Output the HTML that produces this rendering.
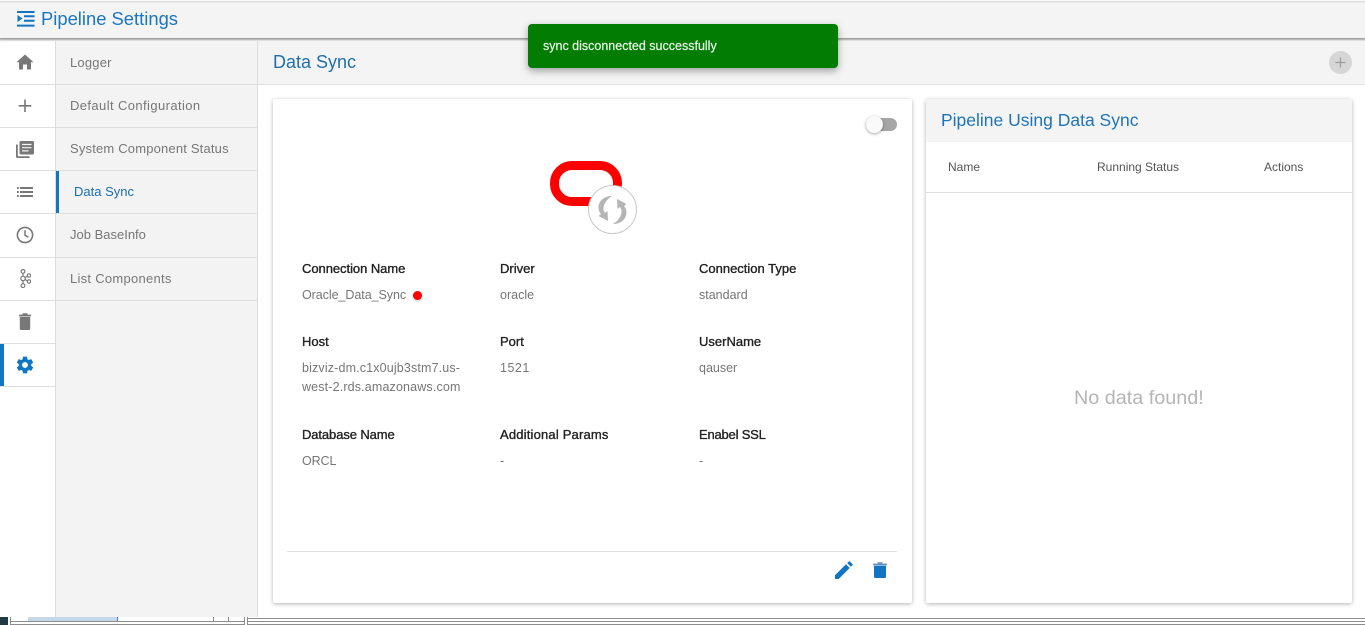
<!DOCTYPE html>
<html><head><meta charset="utf-8"><title>Pipeline Settings</title>
<style>
*{box-sizing:border-box}
html,body{margin:0;padding:0;width:1365px;height:625px;overflow:hidden;background:#fff;font-family:"Liberation Sans",sans-serif}
.a{position:absolute}
.t{position:absolute;white-space:nowrap;line-height:16px}
.lab{font-size:13px;color:#222;font-weight:400;-webkit-text-stroke:.35px #222}
.val{font-size:12.5px;color:#767676;line-height:18.5px}
.menu{font-size:13px;color:#777;left:70px}
.hl{position:absolute;height:1px;background:#dedede}
</style></head><body>
<div class="a" style="left:0;top:0;width:1365px;height:2px;background:#fff"></div>
<div class="a" style="left:0;top:2px;width:1365px;height:36px;background:#f4f4f4;border-top:1px solid #e8e8e8;box-shadow:0 1px 2px 1px #9a9a9a"></div>
<svg class="a" style="left:17px;top:11px" width="18" height="16" viewBox="0 0 18 16"><path d="M0 1H17.500M7 5.300H17.500M7 9.700H17.500M0 14.600H17.500" stroke="#1175c2" stroke-width="2" fill="none"/><path d="M0.500 4l5 3.500-5 3.500z" fill="#1175c2"/></svg>
<div class="t" style="left:41px;top:9px;font-size:18.400px;line-height:20px;color:#1a76c0">Pipeline Settings</div>

<!-- icon rail -->
<div class="a" style="left:55px;top:41px;width:203px;height:576px;background:#f3f3f3;border-left:1px solid #dcdcdc;border-right:1px solid #dcdcdc"></div>
<div class="hl" style="left:0;top:84px;width:258px"></div>
<div class="hl" style="left:0;top:127px;width:258px"></div>
<div class="hl" style="left:0;top:170px;width:258px"></div>
<div class="hl" style="left:0;top:213px;width:258px"></div>
<div class="hl" style="left:0;top:257px;width:258px"></div>
<div class="hl" style="left:0;top:300px;width:258px"></div>
<div class="hl" style="left:0;top:343px;width:55px"></div>
<div class="hl" style="left:0;top:386px;width:55px"></div>
<div class="a" style="left:56px;top:171px;width:3px;height:42px;background:#0f76c1"></div>
<div class="a" style="left:0;top:344px;width:4px;height:42px;background:#0f76c1"></div>

<svg class="a" style="left:16px;top:54px" width="18" height="16" viewBox="0 0 18 16"><path d="M9 .5L.5 8.200H3V15.500H7V10.500H11V15.500H15V8.200H17.500z" fill="#787878"/></svg>
<svg class="a" style="left:18px;top:99px" width="14" height="14" viewBox="0 0 14 14"><path d="M7 .5V13M.7 6.800H13.300" stroke="#787878" stroke-width="1.600" fill="none"/></svg>
<svg class="a" style="left:16px;top:141px" width="18" height="17" viewBox="0 0 18 17"><path d="M0 3.500H1.800V15.200H13.500V17H1.500Q0 17 0 15.500z" fill="#787878"/><path d="M3.500 1.500Q3.500 0 5 0H16.500Q18 0 18 1.500V12Q18 13.500 16.500 13.500H5Q3.500 13.500 3.500 12z" fill="#787878"/><path d="M6 3.500H15.500M6 6.700H15.500M6 9.900H12.500" stroke="#f3f3f3" stroke-width="1.200"/></svg>
<svg class="a" style="left:17px;top:187px" width="16" height="10" viewBox="0 0 16 10"><path d="M0 1H1.800M3 1H16M0 5H1.800M3 5H16M0 9H1.800M3 9H16" stroke="#787878" stroke-width="2"/></svg>
<svg class="a" style="left:16px;top:226px" width="18" height="18" viewBox="0 0 18 18"><circle cx="9" cy="9" r="7.600" fill="none" stroke="#787878" stroke-width="1.600"/><path d="M9 4.300V9.300L12.500 11.200" fill="none" stroke="#787878" stroke-width="1.500"/></svg>
<svg class="a" style="left:20px;top:269px" width="11" height="19" viewBox="0 0 11 19" fill="none" stroke="#787878" stroke-width="1.200"><circle cx="3" cy="2.400" r="1.900"/><circle cx="3" cy="9.500" r="2.200"/><circle cx="3" cy="16.600" r="1.900"/><circle cx="9" cy="6.500" r="1.700"/><circle cx="9" cy="12.500" r="1.700"/><path d="M3 4.300V7.300M3 11.700V14.700M5 8.500L7.500 7.200M5 10.500L7.500 11.800"/></svg>
<svg class="a" style="left:19px;top:313px" width="12" height="17" viewBox="0 0 12 17"><path d="M0 1.600H12V3.200H0zM3.500 .2H8.500V2H3.500z" fill="#787878"/><path d="M.8 3.800H11.200V15.500Q11.200 17 9.700 17H2.300Q.8 17 .8 15.500z" fill="#787878"/></svg>
<svg class="a" style="left:15px;top:355px" width="20" height="20" viewBox="0 0 24 24"><path fill="#0f76c1" d="M19.430 12.980c.04-.32.07-.64.07-.98s-.03-.66-.07-.98l2.110-1.650c.19-.15.24-.42.12-.64l-2-3.460c-.12-.22-.39-.3-.61-.22l-2.490 1c-.52-.4-1.080-.73-1.690-.98l-.38-2.650C14.460 2.180 14.250 2 14 2h-4c-.25 0-.46.18-.49.42l-.38 2.650c-.61.25-1.170.59-1.690.98l-2.490-1c-.23-.09-.49 0-.61.22l-2 3.460c-.13.22-.07.49.12.64l2.110 1.650c-.04.32-.07.65-.07.98s.03.66.07.98l-2.110 1.650c-.19.15-.24.42-.12.64l2 3.460c.12.22.39.3.61.22l2.490-1c.52.4 1.080.73 1.690.98l.38 2.650c.03.24.24.42.49.42h4c.25 0 .46-.18.49-.42l.38-2.650c.61-.25 1.170-.59 1.690-.98l2.490 1c.23.09.49 0 .61-.22l2-3.460c.12-.22.07-.49-.12-.64l-2.110-1.650zM12 15.500c-1.930 0-3.500-1.570-3.500-3.500s1.570-3.500 3.500-3.500 3.500 1.570 3.500 3.500-1.570 3.500-3.500 3.500z"/></svg>

<div class="t menu" style="top:55px;letter-spacing:.2px">Logger</div>
<div class="t menu" style="top:98px;letter-spacing:.4px">Default Configuration</div>
<div class="t menu" style="top:141px;letter-spacing:.18px">System Component Status</div>
<div class="t" style="left:74px;top:184px;font-size:13px;color:#1a6db0">Data Sync</div>
<div class="t menu" style="top:227px">Job BaseInfo</div>
<div class="t menu" style="top:271px;letter-spacing:.27px">List Components</div>

<!-- main header -->
<div class="a" style="left:258px;top:41px;width:1107px;height:44px;background:#f4f4f4;border-bottom:1px solid #e2e2e2"></div>
<div class="t" style="left:273px;top:52px;font-size:18px;line-height:21px;color:#1f6fae">Data Sync</div>
<div class="a" style="left:1329px;top:51px;width:23px;height:23px;border-radius:50%;background:#d6d6d6"></div>
<svg class="a" style="left:1335px;top:57px" width="11" height="11" viewBox="0 0 11 11"><path d="M5.500 .5V10.500M.5 5.500H10.500" stroke="#9c9c9c" stroke-width="1.300"/></svg>

<!-- left card -->
<div class="a" style="left:273px;top:99px;width:639px;height:504px;background:#fff;border-radius:2px;box-shadow:0 1px 4px rgba(0,0,0,.3)"></div>
<div class="a" style="left:866px;top:118px;width:31px;height:13px;border-radius:7px;background:#a6a6a6"></div>
<div class="a" style="left:866px;top:116px;width:17px;height:17px;border-radius:50%;background:#fafafa;box-shadow:0 1px 3px rgba(0,0,0,.35)"></div>

<div class="a" style="left:550px;top:161px;width:72px;height:45px;border:9px solid #f00;border-radius:22px"></div>
<div class="a" style="left:588px;top:185px;width:49px;height:49px;border-radius:50%;background:#fff;border:1px solid #c8c8c8"></div>
<svg class="a" style="left:597px;top:195px" width="31" height="30" viewBox="0 0 31 30" fill="#b5b5b5"><path d="M15 1C7 1 1.500 6 1.500 12.500c0 2.500 1 5 2.500 6.500L1.500 21l9.500 5-.5-10-2.500 2C6.500 16 6 13.500 7 10.500 8.500 6.500 11 3.500 15 1z"/><path d="M16 29c8 0 13.500-5 13.500-11.500 0-2.500-1-5-2.500-6.500l2.500-2-9.500-5 .5 10 2.500-2c1.500 2 2 4.500 1 7.500C22.500 23.500 20 26.500 16 29z"/></svg>

<div class="t lab" style="left:302px;top:261px;letter-spacing:-.05px">Connection Name</div>
<div class="t lab" style="left:500px;top:261px">Driver</div>
<div class="t lab" style="left:699px;top:261px">Connection Type</div>
<div class="t val" style="left:302px;top:286px;letter-spacing:-.05px">Oracle_Data_Sync</div>
<div class="a" style="left:413px;top:291px;width:9px;height:9px;border-radius:50%;background:#f00;box-shadow:0 1px 2px rgba(0,0,0,.25)"></div>
<div class="t val" style="left:500px;top:286px">oracle</div>
<div class="t val" style="left:699px;top:286px">standard</div>

<div class="t lab" style="left:302px;top:334px">Host</div>
<div class="t lab" style="left:500px;top:334px">Port</div>
<div class="t lab" style="left:699px;top:334px">UserName</div>
<div class="t val" style="left:302px;top:359px;letter-spacing:.15px">bizviz-dm.c1x0ujb3stm7.us-<br>west-2.rds.amazonaws.com</div>
<div class="t val" style="left:500px;top:359px;letter-spacing:.5px">1521</div>
<div class="t val" style="left:699px;top:359px">qauser</div>

<div class="t lab" style="left:302px;top:427px;letter-spacing:-.1px">Database Name</div>
<div class="t lab" style="left:500px;top:427px;letter-spacing:.18px">Additional Params</div>
<div class="t lab" style="left:699px;top:427px;letter-spacing:-.2px">Enabel SSL</div>
<div class="t val" style="left:302px;top:452px;letter-spacing:-.1px">ORCL</div>
<div class="t val" style="left:500px;top:452px">-</div>
<div class="t val" style="left:699px;top:452px">-</div>

<div class="hl" style="left:287px;top:551px;width:610px"></div>
<svg class="a" style="left:835px;top:561px" width="18" height="18" viewBox="0 0 18 18"><path d="M0 18V14.300L11 3.300 14.700 7 3.700 18zM12.200 2.100L13.700.6Q14.300 0 15 .6L17.400 3Q18 3.700 17.400 4.300L15.900 5.800z" fill="#1175c2"/></svg>
<svg class="a" style="left:873px;top:562px" width="14" height="16" viewBox="0 0 14 16"><path d="M0 1.600H14V3H0zM4.500 .2H9.500V2H4.500z" fill="#6b8fb8"/><path d="M1 3.500H13V14.500Q13 16 11.500 16H2.500Q1 16 1 14.500z" fill="#1175c2"/></svg>

<!-- right card -->
<div class="a" style="left:926px;top:99px;width:426px;height:504px;background:#fff;border-radius:2px;box-shadow:0 1px 4px rgba(0,0,0,.3)"></div>
<div class="a" style="left:926px;top:99px;width:426px;height:43px;background:#f4f4f4;border-radius:2px 2px 0 0"></div>
<div class="t" style="left:941px;top:110px;font-size:17.500px;line-height:21px;color:#1f74b8">Pipeline Using Data Sync</div>
<div class="t" style="left:948px;top:159px;font-size:12px;color:#555">Name</div>
<div class="t" style="left:1097px;top:159px;font-size:12px;color:#555">Running Status</div>
<div class="t" style="left:1264px;top:159px;font-size:12px;color:#555">Actions</div>
<div class="hl" style="left:926px;top:192px;width:426px"></div>
<div class="t" style="left:1074px;top:387px;font-size:19.800px;line-height:23px;color:#b5b5b5">No data found!</div>

<!-- toast -->
<div class="a" style="left:528px;top:24px;width:310px;height:44px;background:#027d02;border-radius:4px;box-shadow:0 3px 8px rgba(0,0,0,.35)"></div>
<div class="t" style="left:543px;top:38px;font-size:12.500px;color:#eaf5ea;-webkit-text-stroke:.2px #eaf5ea">sync disconnected successfully</div>

<!-- bottom strip -->
<div class="a" style="left:0;top:617px;width:1365px;height:8px;background:#fff"></div>
<div class="a" style="left:0;top:617px;width:8px;height:8px;background:#1f3a40"></div>
<div class="a" style="left:10px;top:617px;width:1px;height:8px;background:#8c8c8c"></div>
<div class="a" style="left:10px;top:621px;width:234px;height:1px;background:#8c8c8c"></div>
<div class="a" style="left:10px;top:624px;width:234px;height:1px;background:#8c8c8c"></div>
<div class="a" style="left:244px;top:617px;width:1px;height:8px;background:#8c8c8c"></div>
<div class="a" style="left:28px;top:617px;width:90px;height:4px;background:#c5d8ea;border-right:1px solid #3a88dd"></div>
<div class="a" style="left:213px;top:617px;width:1px;height:4px;background:#8c8c8c"></div>
<div class="a" style="left:228px;top:617px;width:1px;height:4px;background:#8c8c8c"></div>
<div class="a" style="left:247px;top:617px;width:1px;height:8px;background:#8c8c8c"></div>
<div class="a" style="left:247px;top:618px;width:1118px;height:1px;background:#8c8c8c"></div>
<div class="a" style="left:247px;top:621px;width:1118px;height:1px;background:#8c8c8c"></div>
<div class="a" style="left:247px;top:624px;width:1118px;height:1px;background:#8c8c8c"></div>
</body></html>
